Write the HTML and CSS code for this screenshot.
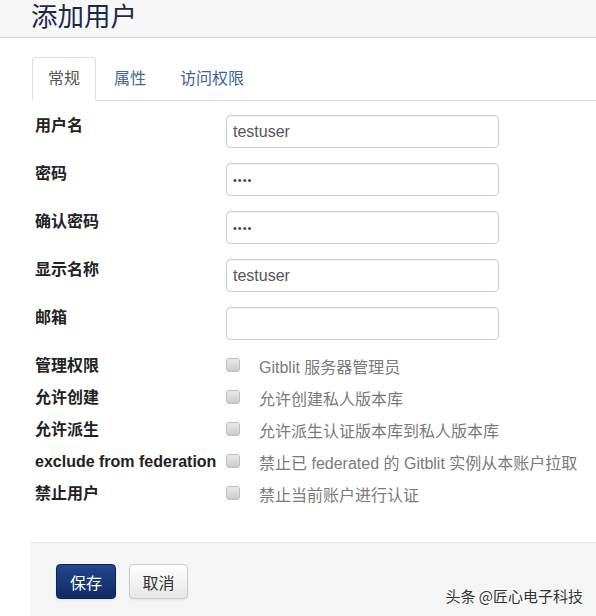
FILE: index.html
```html
<!DOCTYPE html>
<html lang="zh-CN">
<head>
  <meta charset="UTF-8" />
  <title>添加用户</title>
  <link rel="stylesheet" href="styles.css">
</head>
<body>

  <div class="page-header">
    <h1>添加用户</h1>
  </div>

  <div class="content">
    <ul class="tabs">
      <li class="active"><a href="#">常规</a></li>
      <li><a href="#">属性</a></li>
      <li><a href="#">访问权限</a></li>
    </ul>

    <!-- 常规 -->
    <div class="form">
      <label class="label">用户名</label>
      <input type="text" value="testuser" />

      <label class="label">密码</label>
      <input type="password" value="test" />

      <label class="label">确认密码</label>
      <input type="password" value="test" />

      <label class="label">显示名称</label>
      <input type="text" value="testuser" />

      <label class="label">邮箱</label>
      <input type="text" value="" />
    </div>

    <div class="form checks">
      <label class="label">管理权限</label>
      <div class="check"><input type="checkbox" /><span>Gitblit 服务器管理员</span></div>

      <label class="label">允许创建</label>
      <div class="check"><input type="checkbox" /><span>允许创建私人版本库</span></div>

      <label class="label">允许派生</label>
      <div class="check"><input type="checkbox" /><span>允许派生认证版本库到私人版本库</span></div>

      <label class="label latin">exclude from federation</label>
      <div class="check"><input type="checkbox" /><span>禁止已 federated 的 Gitblit 实例从本账户拉取</span></div>

      <label class="label">禁止用户</label>
      <div class="check"><input type="checkbox" /><span>禁止当前账户进行认证</span></div>
    </div>

    <div class="form-actions">
      <button class="btn btn-primary">保存</button>
      <button class="btn">取消</button>
    </div>
  </div>

  <div class="watermark">头条 @匠心电子科技</div>

</body>
</html>
```

FILE: styles.css
```css
body {
  margin: 0;
  font-family: "Liberation Sans", "Noto Sans CJK SC", sans-serif;
  font-size: 16px;
  color: #333;
  background: white;
  position: relative;
  height: 616px;
  overflow: hidden;
}

.page-header {
  background: #f7f7f7;
  border-bottom: 1px solid #d4d4d4;
  height: 37px;
}

.page-header h1 {
  margin: 0;
  padding-left: 31px;
  font-size: 26.5px;
  font-weight: normal;
  line-height: 35px;
  color: #1b2a4a;
}

.content {
  margin-left: 30px;
}

.tabs {
  list-style: none;
  margin: 19px 0 0 2px;
  padding: 0;
  display: flex;
  border-bottom: 1px solid #ddd;
}

.tabs li {
  margin-right: 2px;
  margin-bottom: -1px;
}

.tabs a {
  display: block;
  padding: 0 15px;
  line-height: 42px;
  border: 1px solid transparent;
  border-radius: 4px 4px 0 0;
  color: #3d6399;
  text-decoration: none;
}

.tabs .active a {
  color: #555;
  background: white;
  border-color: #ddd #ddd transparent;
}

.form {
  display: grid;
  grid-template-columns: 191px 273px;
  row-gap: 15px;
  padding-left: 5px;
  margin-top: 14px;
}

.label {
  font-weight: bold;
  line-height: 22px;
  color: #222;
}

.latin {
  white-space: nowrap;
}

.form input[type="text"],
.form input[type="password"] {
  box-sizing: border-box;
  height: 33px;
  margin: 0;
  padding: 0 6px;
  border: 1px solid #ccc;
  border-radius: 4px;
  font-family: "Liberation Sans", sans-serif;
  font-size: 16px;
  color: #555;
  box-shadow: inset 0 1px 1px rgba(0,0,0,0.05);
}

.form input[type="password"] {
  font-size: 11px;
  letter-spacing: 1px;
  color: #444;
}

.checks {
  margin-top: 10px;
  row-gap: 0;
  grid-template-columns: 191px 1fr;
  grid-auto-rows: 32px;
  align-items: center;
}

.check {
  display: flex;
  align-items: center;
  white-space: nowrap;
  color: #7a7a7a;
}

.check input {
  appearance: none;
  width: 14px;
  height: 14px;
  margin: -3px 19px 0 0;
  border: 1px solid #bdbdbd;
  border-radius: 3px;
  background: linear-gradient(#e8e8e8, #cdcdcd);
}

.form-actions {
  margin-top: 32px;
  background: #f5f5f5;
  border-top: 1px solid #e5e5e5;
  padding: 21px 0 30px 26px;
  display: flex;
  gap: 13px;
}

.btn {
  height: 35px;
  width: 59px;
  padding: 0;
  white-space: nowrap;
  border: 1px solid #ccc;
  border-radius: 4px;
  font-family: "Noto Sans CJK SC", sans-serif;
  font-size: 16px;
  color: #333;
  background: linear-gradient(#fff, #e6e6e6);
  box-shadow: 0 1px 2px rgba(0,0,0,0.08);
}

.btn-primary {
  width: 60px;
  color: white;
  border-color: #0c2355;
  background: linear-gradient(#22478c, #0e2a63);
}

.watermark {
  position: absolute;
  right: 13px;
  top: 585px;
  font-family: "Noto Sans CJK SC", sans-serif;
  font-size: 15px;
  color: #333;
  text-shadow: 0 0 2px white;
}
```
